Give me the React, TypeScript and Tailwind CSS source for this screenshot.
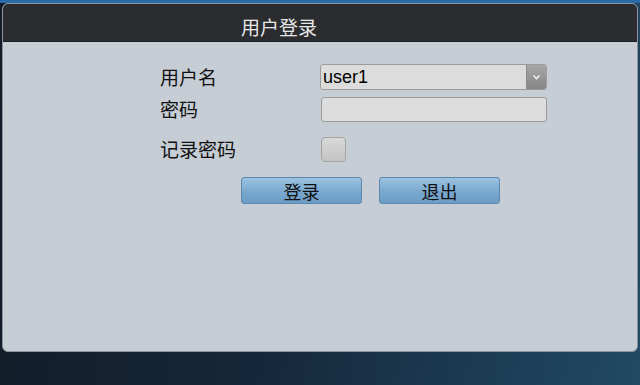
export default function App() {
  const cjk = { fontFamily: '"Noto Sans CJK SC", "Liberation Sans", sans-serif' };
  return (
    <div
      className="w-[640px] h-[385px] overflow-hidden bg-[linear-gradient(100deg,#121b26_0%,#15273a_45%,#1c3a52_75%,#214a63_100%)] border-t-[3px] border-[#2a6aa8] px-[2px]"
      style={cjk}
    >
      <div className="h-[349px] rounded-[6px] bg-[#c6cdd4] overflow-hidden flex flex-col border border-[#8d96a0]">
        <div className="h-[38px] shrink-0 bg-[#2a2c30] border-b border-[#1c1d20] flex items-end pb-[1px] pl-[238px]">
          <span className="text-[19px] leading-[27px] text-[#e8e8e8]">用户登录</span>
        </div>
        <div className="flex flex-col pt-[22px] pl-[157px]">
          <div className="flex items-center h-[26px]">
            <span className="w-[160px] text-[19px] text-[#111]">用户名</span>
            <div className="flex w-[227px] h-[26px] rounded-[3px] border border-[#9c9c9c] bg-[#dcdcdc] overflow-hidden">
              <span
                className="flex-1 pl-[2px] text-[18px] leading-[24px] text-black"
                style={{ fontFamily: '"Liberation Sans", Arial, sans-serif' }}
              >
                user1
              </span>
              <div className="w-[20px] h-full bg-[linear-gradient(#a8a8a8,#858585)] border-l border-[#8a8a8a] flex items-center justify-center">
                <svg width="9" height="6" viewBox="0 0 9 6">
                  <path d="M1.5 1.5 L4.5 4.5 L7.5 1.5" stroke="#f2f2f2" strokeWidth="1.6" fill="none" />
                </svg>
              </div>
            </div>
          </div>
          <div className="flex items-center h-[25px] mt-[7px]">
            <span className="w-[161px] text-[19px] text-[#111]">密码</span>
            <div className="w-[226px] h-[25px] rounded-[3px] border border-[#9c9c9c] bg-[#dcdcdc]" />
          </div>
          <div className="flex items-center h-[25px] mt-[15px]">
            <span className="w-[161px] text-[19px] text-[#111]">记录密码</span>
            <div className="w-[25px] h-[25px] rounded-[4px] border border-[#a4a4a4] bg-[linear-gradient(#d8d8d8,#c4c4c4)]" />
          </div>
          <div className="flex gap-[17px] mt-[15px] ml-[81px]">
            <button className="w-[121px] h-[27px] rounded-[3px] border border-[#5b88ad] bg-[linear-gradient(#9cc2e0,#78a8cf_55%,#6b9dc6)] text-[18px] leading-[24px] text-[#111]">
              登录
            </button>
            <button className="w-[121px] h-[27px] rounded-[3px] border border-[#5b88ad] bg-[linear-gradient(#9cc2e0,#78a8cf_55%,#6b9dc6)] text-[18px] leading-[24px] text-[#111]">
              退出
            </button>
          </div>
        </div>
      </div>
    </div>
  );
}
